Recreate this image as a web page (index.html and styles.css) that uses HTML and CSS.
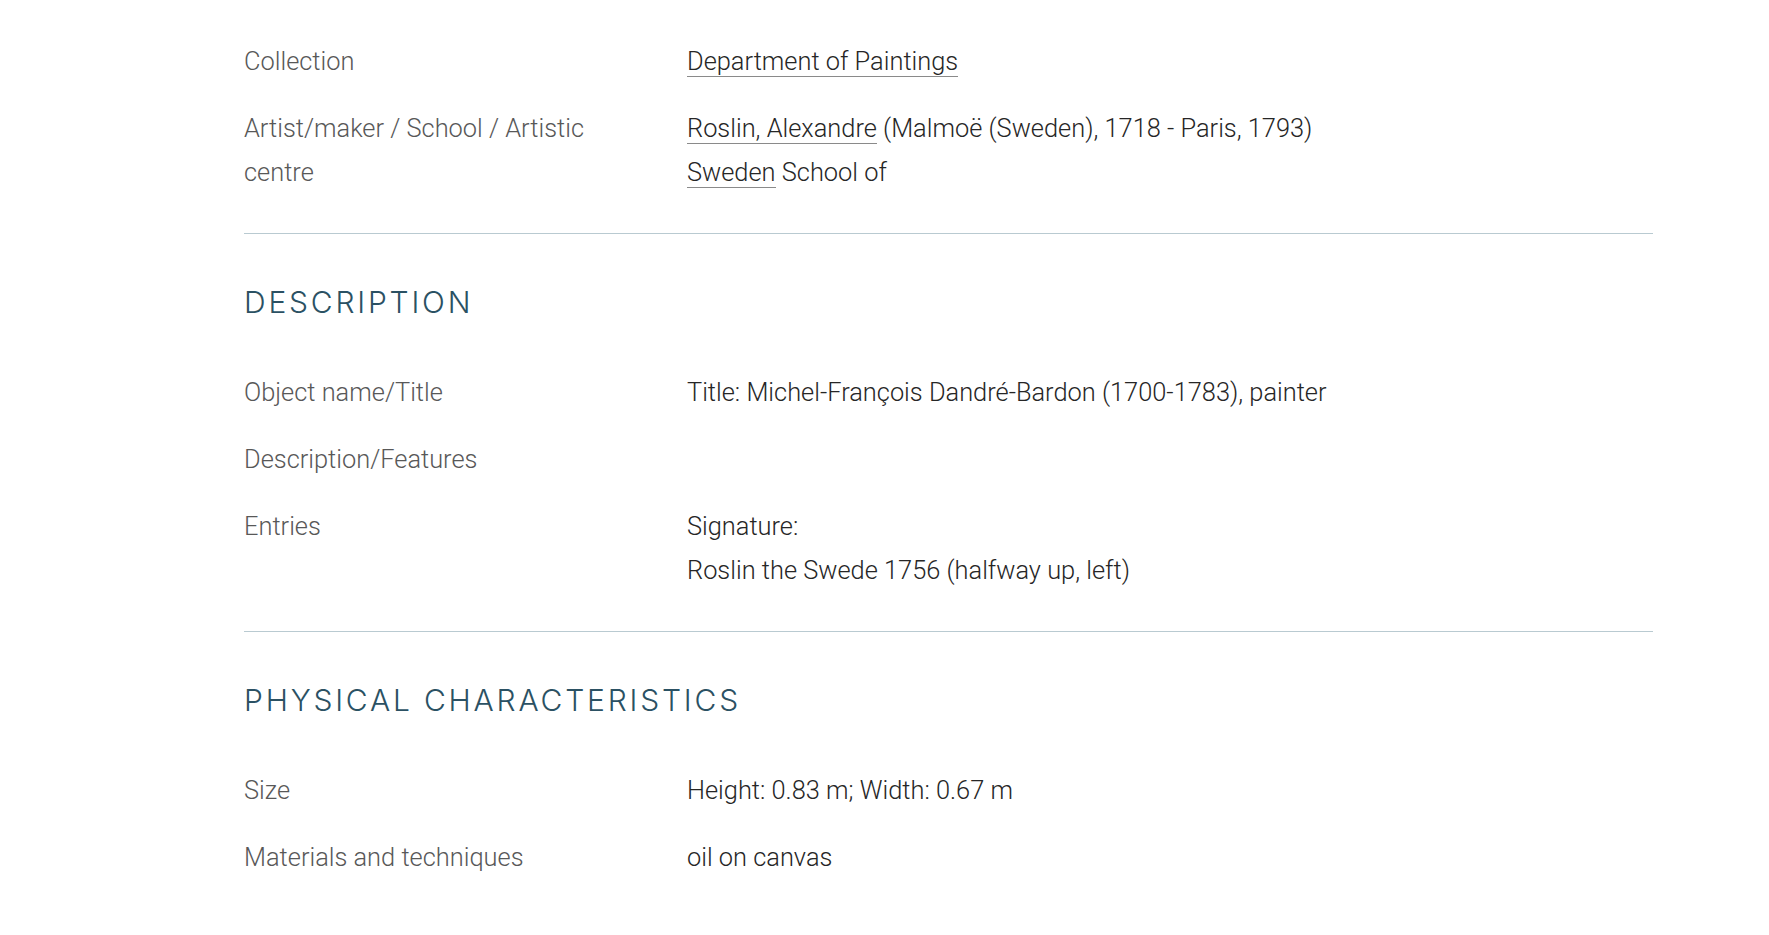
FILE: index.html
```html
<!DOCTYPE html>
<html lang="en">
<head>
<meta charset="utf-8">
<title>Roslin – Michel-François Dandré-Bardon</title>
<link rel="stylesheet" href="styles.css">
</head>
<body>
<main class="record">
  <section class="block block-first">
    <dl class="fields">
      <div class="row">
        <dt class="label">Collection</dt>
        <dd class="value"><a class="link" href="#">Department of Paintings</a></dd>
      </div>
      <div class="row">
        <dt class="label">Artist/maker / School / Artistic centre</dt>
        <dd class="value">
          <div><a class="link" href="#">Roslin, Alexandre</a> (Malmoë (Sweden), 1718 - Paris, 1793)</div>
          <div><a class="link" href="#">Sweden</a> School of</div>
        </dd>
      </div>
    </dl>
  </section>

  <section class="block">
    <h2 class="heading">DESCRIPTION</h2>
    <dl class="fields">
      <div class="row">
        <dt class="label">Object name/Title</dt>
        <dd class="value">Title: Michel-François Dandré-Bardon (1700-1783), painter</dd>
      </div>
      <div class="row">
        <dt class="label">Description/Features</dt>
        <dd class="value"></dd>
      </div>
      <div class="row">
        <dt class="label">Entries</dt>
        <dd class="value">
          <div>Signature:</div>
          <div>Roslin the Swede 1756 (halfway up, left)</div>
        </dd>
      </div>
    </dl>
  </section>

  <section class="block block-last">
    <h2 class="heading">PHYSICAL CHARACTERISTICS</h2>
    <dl class="fields">
      <div class="row">
        <dt class="label">Size</dt>
        <dd class="value">Height: 0.83 m; Width: 0.67 m</dd>
      </div>
      <div class="row">
        <dt class="label">Materials and techniques</dt>
        <dd class="value">oil on canvas</dd>
      </div>
    </dl>
  </section>
</main>
</body>
</html>
```

FILE: styles.css
```css
* {
  box-sizing: border-box;
}

html, body {
  margin: 0;
  padding: 0;
  background: #ffffff;
}

body {
  font-family: Roboto, "Liberation Sans", sans-serif;
  font-weight: 300;
  font-size: 25.4px;
  line-height: 44px;
}

.record {
  width: 1409px;
  margin-left: 244px;
  padding-top: 16px;
}

.block {
  border-bottom: 1px solid #b9cad1;
  padding-bottom: 39px;
  margin-bottom: 46px;
}

.block-last {
  border-bottom: none;
}

.heading {
  margin: 0 0 23px;
  font-family: Inter, "Open Sans", sans-serif;
  font-weight: 350;
  font-size: 30px;
  line-height: 44px;
  letter-spacing: 2.8px;
  color: #2b5163;
}

.fields {
  margin: 0;
}

.row {
  display: grid;
  grid-template-columns: 443px 1fr;
  padding: 23px 0 0;
}

.label {
  margin: 0;
  color: #585858;
  max-width: 350px;
}

.value {
  margin: 0;
  color: #262626;
}

.link {
  color: #262626;
  text-decoration: none;
  border-bottom: 1px solid #8a8a8a;
}
```
